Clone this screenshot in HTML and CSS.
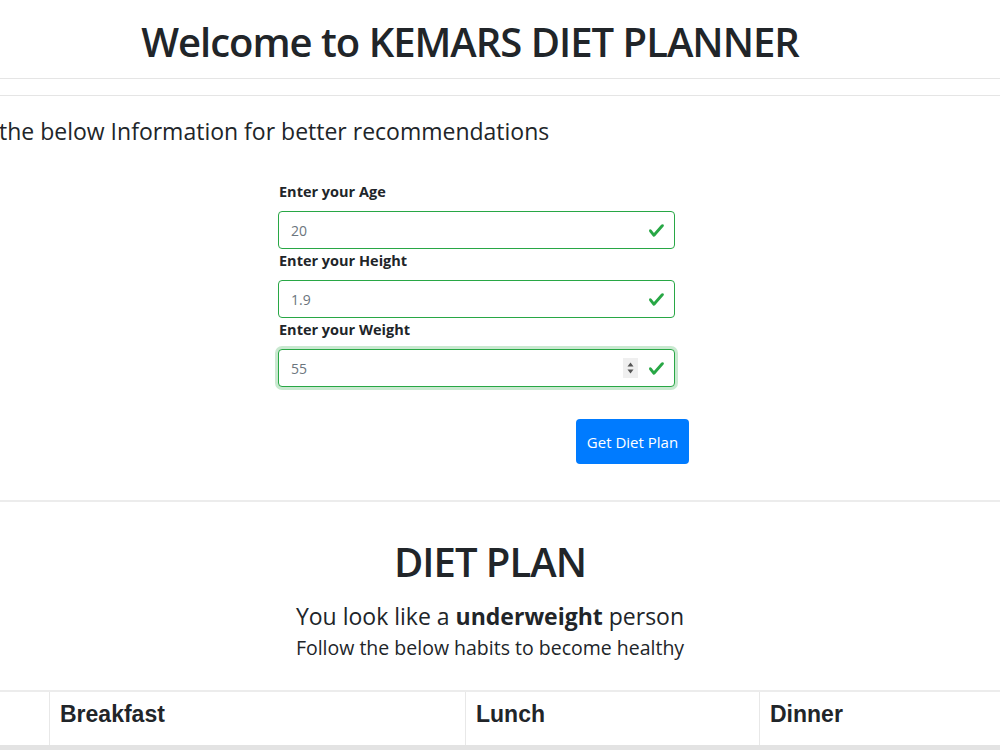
FILE: index.html
```html
<!DOCTYPE html>
<html lang="en">

<head>
    <meta charset="UTF-8">
    <meta name="viewport" content="width=device-width, initial-scale=1.0">
    <title>Kemars Diet Planner</title>
    <link rel="stylesheet" href="styles.css">
</head>

<body>
    <header class="top">
        <h1 class="titulo">Welcome to KEMARS DIET PLANNER</h1>
    </header>
    <div class="faixa"></div>

    <section class="info">
        <h4 class="info-texto">the below Information for better recommendations</h4>

        <form class="form-dados" onsubmit="return false">
            <label for="idade">Enter your Age</label>
            <div class="campo">
                <input type="text" id="idade" value="20">
                <svg class="ok" viewBox="0 0 8 8"><path d="M2.3 6.73L.6 4.53c-.4-1.04.46-1.4 1.1-.8l1.1 1.4 3.4-3.8c.6-.63 1.6-.27 1.2.7l-4 4.6c-.43.5-.8.4-1.1.1z"/></svg>
            </div>

            <label for="altura">Enter your Height</label>
            <div class="campo">
                <input type="text" id="altura" value="1.9">
                <svg class="ok" viewBox="0 0 8 8"><path d="M2.3 6.73L.6 4.53c-.4-1.04.46-1.4 1.1-.8l1.1 1.4 3.4-3.8c.6-.63 1.6-.27 1.2.7l-4 4.6c-.43.5-.8.4-1.1.1z"/></svg>
            </div>

            <label for="peso">Enter your Weight</label>
            <div class="campo">
                <input type="text" id="peso" class="focado" value="55">
                <!-- setinhas do campo numerico -->
                <svg class="spin" viewBox="0 0 15 20"><rect width="15" height="20" fill="#efefef"/><path d="M4.5 8.5L7.5 4.5 10.5 8.5z M4.5 11.5L7.5 15.5 10.5 11.5z" fill="#555"/></svg>
                <svg class="ok" viewBox="0 0 8 8"><path d="M2.3 6.73L.6 4.53c-.4-1.04.46-1.4 1.1-.8l1.1 1.4 3.4-3.8c.6-.63 1.6-.27 1.2.7l-4 4.6c-.43.5-.8.4-1.1.1z"/></svg>
            </div>

            <div class="acoes">
                <button type="submit" class="btn-plano">Get Diet Plan</button>
            </div>
        </form>
    </section>

    <section class="resultado">
        <h1 class="plano-titulo">DIET PLAN</h1>
        <p class="plano-tipo">You look like a <b>underweight</b> person</p>
        <p class="plano-dica">Follow the below habits to become healthy</p>

        <table class="tabela">
            <thead>
                <tr>
                    <th class="col-num"></th>
                    <th class="col-cafe">Breakfast</th>
                    <th class="col-almoco">Lunch</th>
                    <th>Dinner</th>
                </tr>
            </thead>
        </table>
    </section>
</body>

</html>
```

FILE: styles.css
```css
body {
    margin: 0;
    font-family: "Open Sans", "Noto Sans", sans-serif;
    color: #212529;
    background-color: white;
    overflow: hidden;
}

/* Cabecalho */
.top {
    height: 78px;
    border-bottom: 1px solid #e5e5e5;
    display: flex;
    justify-content: center;
    padding-right: 60px;
}

.titulo {
    margin: 0;
    padding-top: 14px;
    font-size: 40px;
    font-weight: 600;
    letter-spacing: -1px;
}

.faixa {
    height: 16px;
    border-bottom: 1px solid #e5e5e5;
}

/* Formulario */
.info {
    padding-top: 20px;
    padding-bottom: 36px;
    border-bottom: 2px solid #ececec;
}

.info-texto {
    margin: 0 0 35px -1px;
    font-size: 23px;
    font-weight: 400;
    line-height: 30px;
}

.form-dados {
    width: 411px;
    margin-left: 278px;
}

label {
    display: block;
    font-size: 14.5px;
    font-weight: 700;
    line-height: 22px;
    margin: 1px 0 8px 1px;
}

.campo {
    position: relative;
    width: 397px;
}

.campo input {
    box-sizing: border-box;
    width: 100%;
    height: 38px;
    padding: 0 40px 0 12px;
    border: 1px solid #28a745;
    border-radius: 4px;
    font-family: inherit;
    font-size: 14px;
    color: #6c757d;
    outline: none;
}

.campo input.focado {
    box-shadow: 0 0 0 3px rgba(40, 167, 69, 0.25);
}

.ok {
    position: absolute;
    right: 10px;
    top: 11px;
    width: 17px;
    height: 17px;
    fill: #28a745;
}

.spin {
    position: absolute;
    right: 37px;
    top: 9px;
    width: 15px;
    height: 20px;
}

.acoes {
    display: flex;
    justify-content: flex-end;
    padding-top: 32px;
}

.btn-plano {
    background-color: #007bff;
    color: white;
    border: none;
    border-radius: 4px;
    width: 113px;
    height: 45px;
    font-family: inherit;
    font-size: 15px;
    cursor: pointer;
}

/* Resultado */
.resultado {
    text-align: center;
}

.plano-titulo {
    margin: 0;
    padding: 36px 20px 0 0;
    font-size: 40px;
    font-weight: 600;
    letter-spacing: -1px;
    line-height: 48px;
}

.plano-tipo {
    margin: 15px 20px 0 0;
    font-size: 23px;
    line-height: 30px;
}

.plano-dica {
    margin: 4px 20px 0 0;
    font-size: 19.5px;
    line-height: 26px;
}

.tabela {
    width: 100%;
    margin-top: 29px;
    border-collapse: collapse;
    border-top: 2px solid #ececec;
    text-align: left;
}

.tabela th {
    font-family: "Liberation Sans", Arial, sans-serif;
    font-size: 23px;
    font-weight: 700;
    line-height: 26px;
    padding: 9px 8px 18px 10px;
    vertical-align: top;
    border-left: 1px solid #e8e8e8;
    border-bottom: 6px solid #e3e3e3;
}

.tabela .col-num {
    width: 31px;
    border-left: none;
}

.tabela .col-cafe {
    width: 397px;
}

.tabela .col-almoco {
    width: 275px;
}
```
